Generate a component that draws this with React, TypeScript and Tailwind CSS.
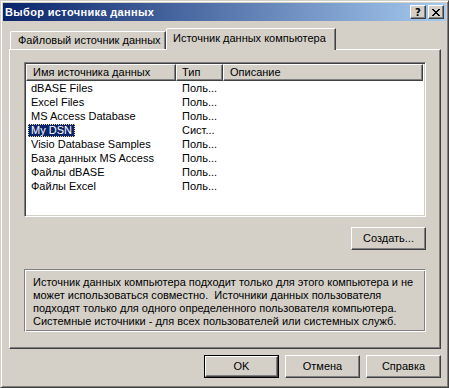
import React from "react";

const raised =
  "border border-t-white border-l-white border-r-[#404040] border-b-[#404040] shadow-[inset_-1px_-1px_#808080]";

function Btn({ children, def = false }: { children: React.ReactNode; def?: boolean }) {
  if (def) {
    return (
      <div className="w-[75px] h-[23px] border border-black bg-[#d4d0c8] flex">
        <div className={`flex-1 flex items-center justify-center ${raised}`}>{children}</div>
      </div>
    );
  }
  return (
    <div className={`w-[75px] h-[23px] bg-[#d4d0c8] flex items-center justify-center ${raised}`}>
      {children}
    </div>
  );
}

const rows: [string, string, boolean][] = [
  ["dBASE Files", "Поль...", false],
  ["Excel Files", "Поль...", false],
  ["MS Access Database", "Поль...", false],
  ["My DSN", "Сист...", true],
  ["Visio Database Samples", "Поль...", false],
  ["База данных MS Access", "Поль...", false],
  ["Файлы dBASE", "Поль...", false],
  ["Файлы Excel", "Поль...", false],
];

export default function App() {
  return (
    <div className="w-[449px] h-[388px] bg-[#d4d0c8] font-['Liberation_Sans',Arial,sans-serif] text-[11px] leading-none text-black">
      <div className="w-full h-full flex flex-col p-[2px] border border-t-[#d4d0c8] border-l-[#d4d0c8] border-r-[#404040] border-b-[#404040] shadow-[inset_1px_1px_white,inset_-1px_-1px_#808080]">
        {/* title bar */}
        <div className="h-[18px] flex items-center bg-[linear-gradient(to_right,#0a246a,#a6caf0)] pl-[2px] pr-[2px]">
          <span className="text-white font-bold text-[11px] tracking-[0.35px] flex-1 whitespace-nowrap">Выбор источника данных</span>
          <div className={`w-[16px] h-[14px] bg-[#d4d0c8] flex items-center justify-center ${raised}`}>
            <span className="font-['DejaVu_Sans',sans-serif] font-bold text-[10px] leading-none mt-[1px]">?</span>
          </div>
          <div className={`ml-[2px] w-[16px] h-[14px] bg-[#d4d0c8] flex items-center justify-center ${raised}`}>
            <svg width="8" height="7" viewBox="0 0 8 7" shapeRendering="crispEdges">
              <path d="M0 0h2v1h-2zM6 0h2v1h-2zM1 1h2v1h-2zM5 1h2v1h-2zM2 2h4v1h-4zM3 3h2v1h-2zM2 4h4v1h-4zM1 5h2v1h-2zM5 5h2v1h-2zM0 6h2v1h-2zM6 6h2v1h-2z" fill="black" />
            </svg>
          </div>
        </div>

        <div className="flex-1 flex flex-col pl-[6px] pr-[5px] pt-[1px]">
          {/* tabs */}
          <div className="h-[27px] flex items-end pl-[1px] relative z-10">
            <div className="w-[156px] h-[18px] rounded-tl-[2px] border-t border-l border-r border-t-white border-l-white border-r-[#404040] shadow-[inset_-1px_0_#808080] flex items-center pl-[7px]">
              <span className="whitespace-nowrap">Файловый источник данных</span>
            </div>
            <div className="w-[170px] h-[22px] mb-[-1px] bg-[#d4d0c8] rounded-tl-[2px] border-t border-l border-r border-t-white border-l-white border-r-[#404040] shadow-[inset_-1px_0_#808080] flex items-start pt-[4px] pl-[6px]">
              <span className="whitespace-nowrap">Источник данных компьютера</span>
            </div>
          </div>

          {/* panel */}
          <div className="h-[300px] border border-t-white border-l-white border-r-[#404040] border-b-[#404040] shadow-[inset_-1px_-1px_#808080] pl-[14px] pt-[12px] flex flex-col">
            {/* list */}
            <div className="w-[402px] h-[155px] bg-white border border-t-[#808080] border-l-[#808080] border-r-white border-b-white shadow-[inset_1px_1px_#404040,inset_-1px_-1px_#d4d0c8] p-[1px] flex flex-col">
              <div className="h-[17px] flex bg-[#d4d0c8] shrink-0 w-[397px]">
                <div className={`w-[150px] h-full flex items-center pl-[6px] ${raised}`}>Имя источника данных</div>
                <div className={`w-[47px] h-full flex items-center pl-[5px] ${raised}`}>Тип</div>
                <div className={`w-[200px] h-full flex items-center pl-[6px] ${raised}`}>Описание</div>
              </div>
              <div className="flex flex-col">
                {rows.map(([name, type, sel]) => (
                  <div key={name} className="h-[14px] flex items-center">
                    <div className="w-[150px] pl-[2px]">
                      <span
                        className={
                          sel
                            ? "inline-flex items-center h-[13px] px-[2px] bg-[#0a246a] text-white border border-dotted border-[#f5db95]"
                            : "inline-flex items-center h-[13px] px-[3px]"
                        }
                      >
                        {name}
                      </span>
                    </div>
                    <div className="w-[47px] pl-[6px]">{type}</div>
                  </div>
                ))}
              </div>
            </div>

            <div className="w-[402px] flex justify-end mt-[10px]">
              <Btn>
                <span>
                  Соз<span className="underline">д</span>ать...
                </span>
              </Btn>
            </div>

            <div className="w-[402px] h-[63px] mt-[19px] border border-t-[#808080] border-l-[#808080] border-r-white border-b-white shadow-[inset_1px_1px_white,inset_-1px_-1px_#808080] pl-[8px] pt-[6px]">
              <div className="leading-[13px] whitespace-pre">
                {"Источник данных компьютера подходит только для этого компьютера и не\nможет использоваться совместно.  Источники данных пользователя\nподходят только для одного определенного пользователя компьютера.\nСистемные источники - для всех пользователей или системных служб."}
              </div>
            </div>
          </div>

          {/* bottom buttons */}
          <div className="flex justify-end gap-[6px] mt-[6px]">
            <Btn def>OK</Btn>
            <Btn>Отмена</Btn>
            <Btn>Справка</Btn>
          </div>
        </div>
      </div>
    </div>
  );
}
